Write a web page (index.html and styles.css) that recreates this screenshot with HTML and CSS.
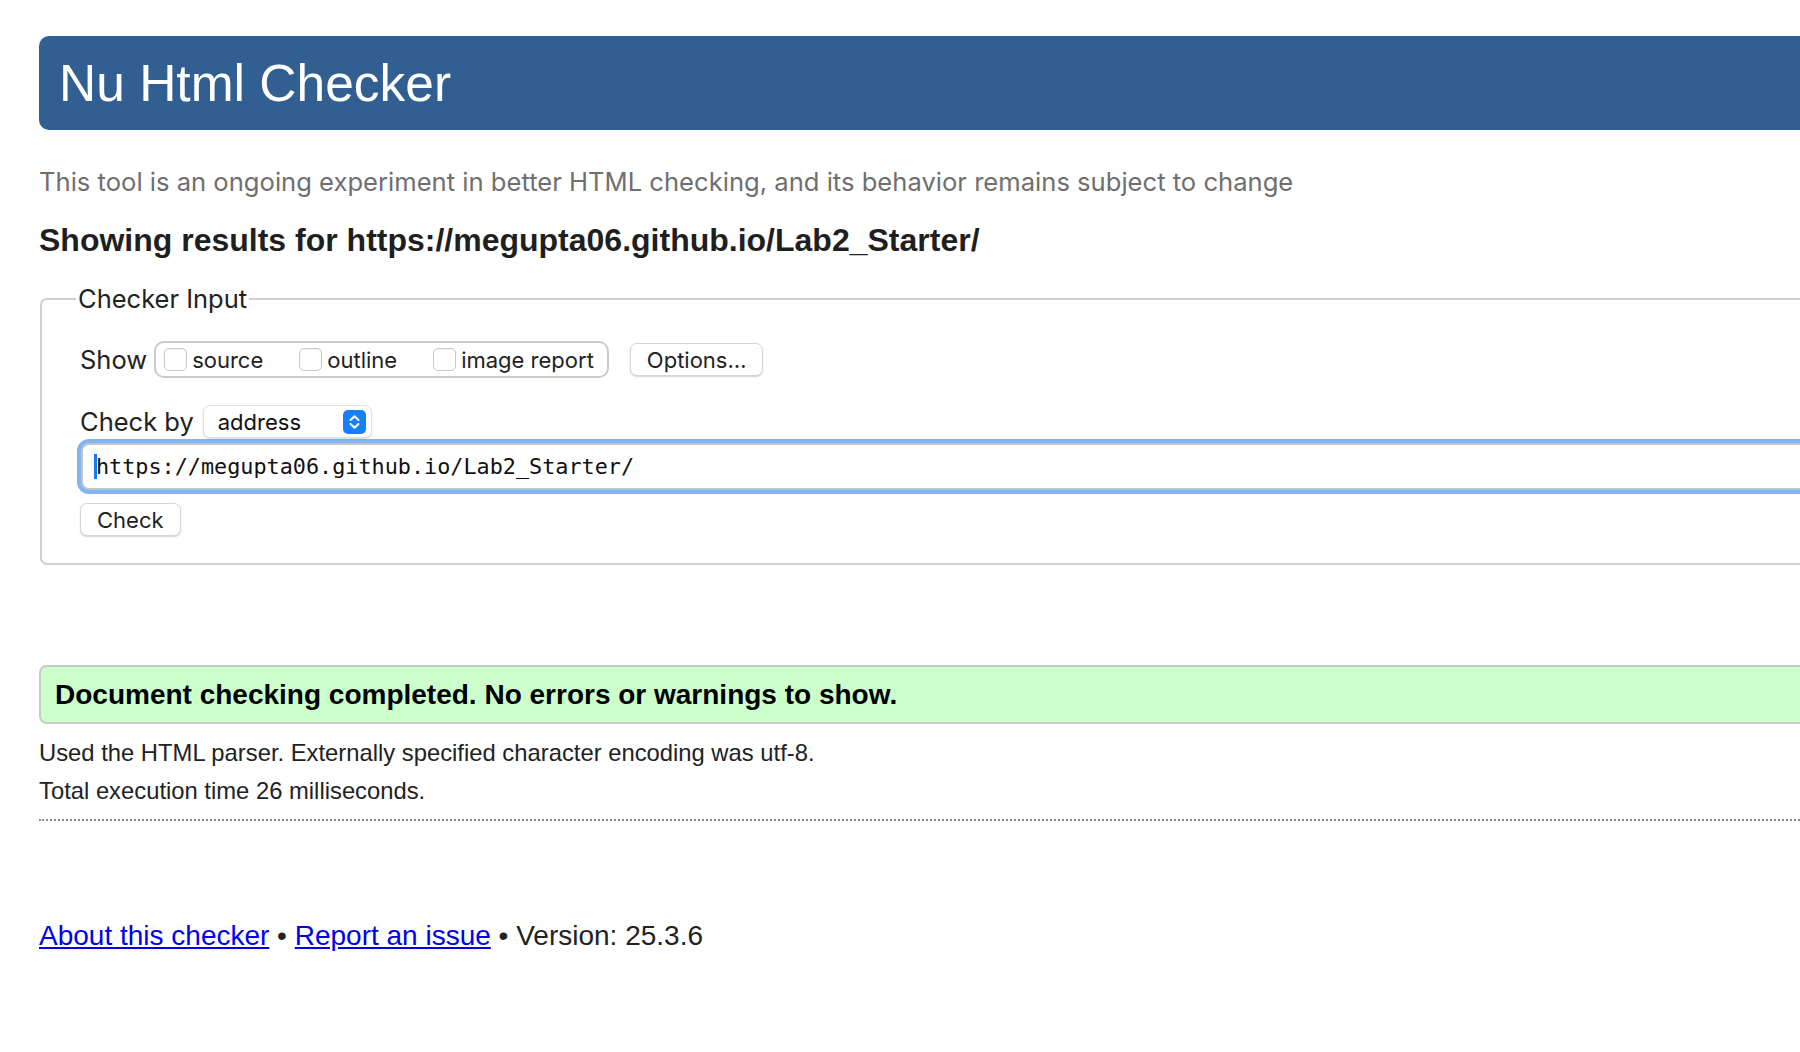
FILE: index.html
```html
<!DOCTYPE html>
<html lang="en">
<head>
<meta charset="utf-8">
<title>Nu Html Checker</title>
<link rel="stylesheet" href="styles.css">
</head>
<body>
<div class="page">
  <h1 class="title">Nu Html Checker</h1>
  <p class="subtitle">This tool is an ongoing experiment in better HTML checking, and its behavior remains subject to change</p>
  <h2 class="results">Showing results for https://megupta06.github.io/Lab2_Starter/</h2>

  <fieldset class="input-box">
    <legend class="legend">Checker Input</legend>
    <div class="row show-row">
      <span class="label">Show</span>
      <div class="group">
        <span class="cb"></span><span class="cb-label">source</span>
        <span class="cb cb-gap"></span><span class="cb-label">outline</span>
        <span class="cb cb-gap"></span><span class="cb-label">image report</span>
      </div>
      <span class="btn options">Options…</span>
    </div>
    <div class="row by-row">
      <span class="label">Check by</span>
      <div class="select">
        <span class="select-text">address</span>
        <svg class="stepper" width="23" height="24" viewBox="0 0 23 24">
          <rect x="0" y="0" width="23" height="24" rx="5" fill="#167ffb"/>
          <path d="M7.5 10 L11.5 6.2 L15.5 10" fill="none" stroke="#fff" stroke-width="2" stroke-linecap="round" stroke-linejoin="round"/>
          <path d="M7.5 14 L11.5 17.8 L15.5 14" fill="none" stroke="#fff" stroke-width="2" stroke-linecap="round" stroke-linejoin="round"/>
        </svg>
      </div>
    </div>
    <div class="url"><span class="caret"></span><span class="url-text">https://megupta06.github.io/Lab2_Starter/</span></div>
    <div class="row check-row">
      <span class="btn check">Check</span>
    </div>
  </fieldset>

  <div class="success">Document checking completed. No errors or warnings to show.</div>
  <p class="info">Used the HTML parser. Externally specified character encoding was utf-8.</p>
  <p class="info">Total execution time 26 milliseconds.</p>
  <hr class="dots">
  <p class="footer"><a href="#">About this checker</a> • <a href="#">Report an issue</a> • Version: 25.3.6</p>
</div>
</body>
</html>
```

FILE: styles.css
```css
html, body {
  margin: 0;
  padding: 0;
  background: #ffffff;
  overflow: hidden;
}
body {
  font-family: "Liberation Sans", Arial, sans-serif;
  color: #222222;
}
.page {
  margin-left: 39px;
  margin-right: -40px;
  padding-top: 36px;
}
.title {
  margin: 0;
  height: 94px;
  line-height: 94px;
  background: #315f91;
  color: #ffffff;
  font-family: "Liberation Sans", Arial, sans-serif;
  font-weight: normal;
  font-size: 51.5px;
  padding-left: 20px;
  border-radius: 10px 0 0 10px;
}
.subtitle {
  margin: 36px 0 0 0;
  font-family: Inter, "Noto Sans", sans-serif;
  font-size: 25.6px;
  line-height: 32px;
  color: #6f6f6f;
}
.results {
  margin: 22px 0 0 0;
  font-size: 32px;
  line-height: 40px;
  font-weight: bold;
  color: #1f1f1f;
}
.input-box {
  margin: 24px 0 0 1px;
  border: 2px solid #cfcfcf;
  border-radius: 7px;
  padding: 27px 0 27px 38px;
  font-family: Inter, "Noto Sans", sans-serif;
  color: #222;
}
.legend {
  margin-left: -4px;
  padding: 0 2px;
  font-size: 25.5px;
  line-height: 30px;
  color: #222;
}
.row {
  display: flex;
  align-items: center;
}
.label {
  font-size: 25.5px;
  color: #222;
}
.show-row {
  height: 37px;
}
.group {
  display: flex;
  align-items: center;
  height: 33px;
  margin-left: 7px;
  padding: 0 13px 0 8px;
  border: 2px solid #cbcbcb;
  border-radius: 10px;
}
.cb {
  width: 21px;
  height: 21px;
  border: 1px solid #c8c8c8;
  border-radius: 5px;
  background: #fff;
  box-shadow: inset 0 1px 1px rgba(0,0,0,0.05);
  margin-right: 5px;
}
.cb-gap {
  margin-left: 36px;
}
.cb-label {
  font-size: 22px;
  color: #222;
}
.btn {
  display: inline-flex;
  align-items: center;
  box-sizing: border-box;
  height: 33px;
  border: 1px solid #d6d6d6;
  border-radius: 7px;
  background: #fff;
  box-shadow: 0 1px 1.5px rgba(0,0,0,0.18);
  font-size: 22px;
  color: #222;
}
.options {
  margin-left: 21px;
  padding: 0 16px;
}
.by-row {
  margin-top: 27px;
  height: 33px;
}
.select {
  display: flex;
  align-items: center;
  box-sizing: border-box;
  width: 169px;
  height: 33px;
  margin-left: 9px;
  padding: 0 5px 0 14px;
  border: 1px solid #e0e0e0;
  border-radius: 7px;
  background: #fff;
  box-shadow: 0 1px 1.5px rgba(0,0,0,0.15);
}
.select-text {
  flex: 1;
  font-size: 22px;
  color: #111;
}
.stepper {
  display: block;
}
.url {
  display: flex;
  align-items: center;
  box-sizing: border-box;
  height: 47px;
  margin: 5px 0 0 1px;
  padding-left: 11px;
  border: 2px solid #c4c4c4;
  border-radius: 8px;
  box-shadow: 0 0 0 4px #80b4f4;
  background: #fff;
}
.caret {
  width: 3px;
  height: 25px;
  background: #1679fa;
  margin-right: -1px;
}
.url-text {
  font-family: "DejaVu Sans Mono", "Liberation Mono", monospace;
  font-size: 21.8px;
  color: #111;
}
.check-row {
  margin-top: 13px;
}
.check {
  padding: 0 16px;
}
.success {
  margin-top: 100px;
  box-sizing: border-box;
  height: 59px;
  line-height: 55px;
  padding-left: 14px;
  background: #ccffcc;
  border: 2px solid #c9c9c9;
  border-radius: 8px 0 0 8px;
  font-size: 28px;
  font-weight: bold;
  color: #000;
}
.info {
  margin: 0;
  font-size: 23.8px;
  line-height: 38px;
  color: #222;
}
.success + .info {
  margin-top: 10px;
}
.dots {
  margin: 9px 0 0 0;
  border: 0;
  border-top: 2px dotted #8c8c8c;
  height: 0;
}
.footer {
  margin: 98px 0 0 0;
  font-size: 28px;
  line-height: 34px;
  color: #222;
}
.footer a {
  color: #0000ee;
}
```
